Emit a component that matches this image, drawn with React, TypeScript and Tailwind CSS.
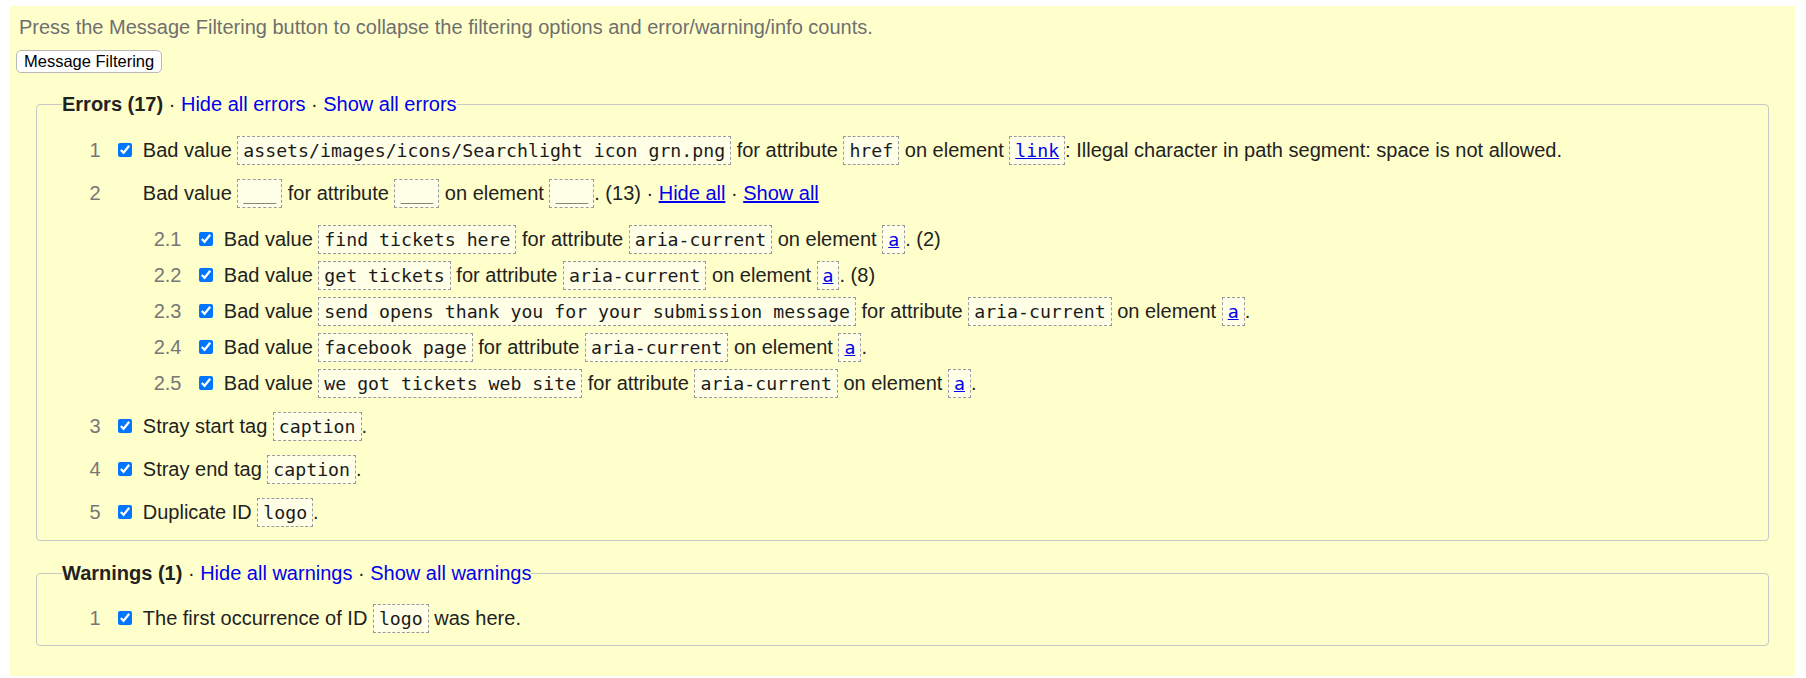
import React from "react";

function C({ children, link }: { children: React.ReactNode; link?: boolean }) {
  return (
    <code className="font-['DejaVu_Sans_Mono',monospace] text-[18.2px] leading-none border border-dashed border-[#9a9a9a] px-[5px] py-[3px] bg-[#ffffe8] text-[#1a1a1a]">
      {link ? <a href="#" className="text-[#0000ee] underline">{children}</a> : children}
    </code>
  );
}

function Row({ num, children, box = true, sub = false }: { num: string; children: React.ReactNode; box?: boolean; sub?: boolean }) {
  return (
    <div className={sub ? "leading-[36px] whitespace-nowrap" : "leading-[43px] whitespace-nowrap"}>
      <span className="inline-block w-[38.5px] text-right text-[#777777]">{num}</span>
      {box ? (
        <input type="checkbox" defaultChecked className="w-[14px] h-[14px] ml-[17.8px] mr-[10.5px] mb-[3px] align-baseline" />
      ) : (
        <span className="inline-block w-[14px] ml-[17.8px] mr-[10.5px]" />
      )}
      <span>{children}</span>
    </div>
  );
}

function Sep() {
  return <span> · </span>;
}

export default function App() {
  return (
    <div className="pt-[6px] font-['Liberation_Sans',Arial,sans-serif] text-[20px] text-[#222222]">
      <div className="ml-[10px] w-[1785px] bg-[#ffffcc] pt-[9.5px] pl-[6px] pr-[6px] pb-[29.5px]">
        <p className="ml-[3px] text-[#6f6f6f] leading-[23px]">
          Press the Message Filtering button to collapse the filtering options and error/warning/info counts.
        </p>
        <div className="mt-[11px] flex">
          <button className="h-[23px] px-[7px] leading-[21px] text-[16.5px] text-black bg-white border border-[#b8b8b8] rounded-[5px]">
            Message Filtering
          </button>
        </div>

        <fieldset className="mt-[20.5px] mx-[20px] border border-[#c8c8c8] rounded-[4px] pl-[25px] pt-[12.5px] pb-[6px]">
          <legend className="leading-[23px]">
            <b>Errors (17)</b>
            <Sep />
            <a href="#" className="text-[#0000ee]">Hide all errors</a>
            <Sep />
            <a href="#" className="text-[#0000ee]">Show all errors</a>
          </legend>
          <Row num="1">
            Bad value <C>assets/images/icons/Searchlight icon grn.png</C> for attribute <C>href</C> on element <C link>link</C>: Illegal character in path segment: space is not allowed.
          </Row>
          <Row num="2" box={false}>
            Bad value <C>___</C> for attribute <C>___</C> on element <C>___</C>. (13) · <a href="#" className="text-[#0000ee] underline">Hide all</a> · <a href="#" className="text-[#0000ee] underline">Show all</a>
          </Row>
          <div className="ml-[81px] mt-[6px]">
            <Row num="2.1" sub>
              Bad value <C>find tickets here</C> for attribute <C>aria-current</C> on element <C link>a</C>. (2)
            </Row>
            <Row num="2.2" sub>
              Bad value <C>get tickets</C> for attribute <C>aria-current</C> on element <C link>a</C>. (8)
            </Row>
            <Row num="2.3" sub>
              Bad value <C>send opens thank you for your submission message</C> for attribute <C>aria-current</C> on element <C link>a</C>.
            </Row>
            <Row num="2.4" sub>
              Bad value <C>facebook page</C> for attribute <C>aria-current</C> on element <C link>a</C>.
            </Row>
            <Row num="2.5" sub>
              Bad value <C>we got tickets web site</C> for attribute <C>aria-current</C> on element <C link>a</C>.
            </Row>
          </div>
          <div className="mt-[4px]">
            <Row num="3">
              Stray start tag <C>caption</C>.
            </Row>
            <Row num="4">
              Stray end tag <C>caption</C>.
            </Row>
            <Row num="5">
              Duplicate ID <C>logo</C>.
            </Row>
          </div>
        </fieldset>

        <fieldset className="mt-[21px] mx-[20px] border border-[#c8c8c8] rounded-[4px] pl-[25px] pt-[12.5px] pb-[5px]">
          <legend className="leading-[23px]">
            <b>Warnings (1)</b>
            <Sep />
            <a href="#" className="text-[#0000ee]">Hide all warnings</a>
            <Sep />
            <a href="#" className="text-[#0000ee]">Show all warnings</a>
          </legend>
          <Row num="1">
            The first occurrence of ID <C>logo</C> was here.
          </Row>
        </fieldset>
      </div>
    </div>
  );
}
